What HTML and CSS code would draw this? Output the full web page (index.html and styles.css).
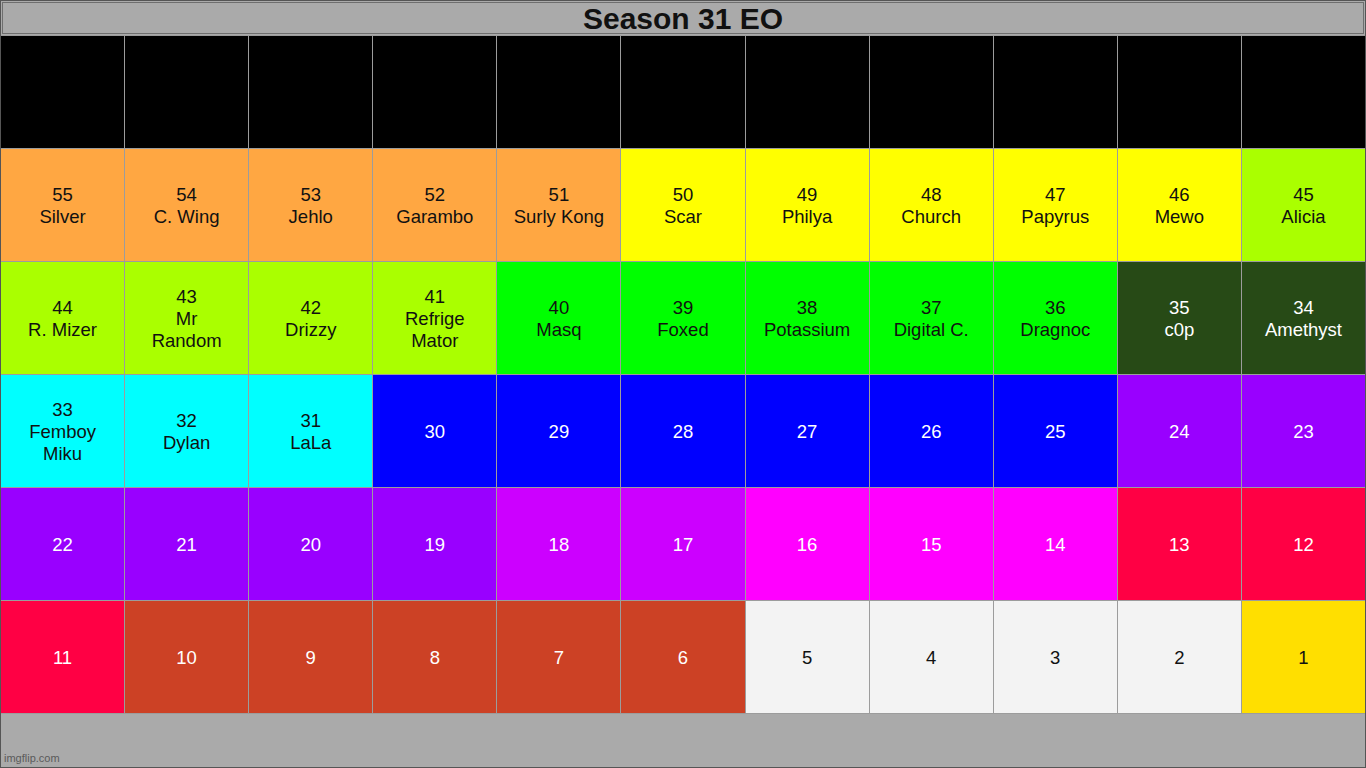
FILE: index.html
```html
<!DOCTYPE html>
<html>
<head>
<meta charset="utf-8">
<title>Season 31 EO</title>
<link rel="stylesheet" href="styles.css">
</head>
<body>
<div class="page">
  <div class="title">Season 31 EO</div>
  <div class="grid">
    <div class="c k"></div><div class="c k"></div><div class="c k"></div><div class="c k"></div><div class="c k"></div><div class="c k"></div><div class="c k"></div><div class="c k"></div><div class="c k"></div><div class="c k"></div><div class="c k"></div>

    <div class="c orange">55<br>Silver</div>
    <div class="c orange">54<br>C. Wing</div>
    <div class="c orange">53<br>Jehlo</div>
    <div class="c orange">52<br>Garambo</div>
    <div class="c orange">51<br>Surly Kong</div>
    <div class="c yellow">50<br>Scar</div>
    <div class="c yellow">49<br>Philya</div>
    <div class="c yellow">48<br>Church</div>
    <div class="c yellow">47<br>Papyrus</div>
    <div class="c yellow">46<br>Mewo</div>
    <div class="c lime">45<br>Alicia</div>

    <div class="c lime">44<br>R. Mizer</div>
    <div class="c lime">43<br>Mr<br>Random</div>
    <div class="c lime">42<br>Drizzy</div>
    <div class="c lime">41<br>Refrige<br>Mator</div>
    <div class="c green">40<br>Masq</div>
    <div class="c green">39<br>Foxed</div>
    <div class="c green">38<br>Potassium</div>
    <div class="c green">37<br>Digital C.</div>
    <div class="c green">36<br>Dragnoc</div>
    <div class="c dgreen">35<br>c0p</div>
    <div class="c dgreen">34<br>Amethyst</div>

    <div class="c cyan">33<br>Femboy<br>Miku</div>
    <div class="c cyan">32<br>Dylan</div>
    <div class="c cyan">31<br>LaLa</div>
    <div class="c blue">30</div>
    <div class="c blue">29</div>
    <div class="c blue">28</div>
    <div class="c blue">27</div>
    <div class="c blue">26</div>
    <div class="c blue">25</div>
    <div class="c purple">24</div>
    <div class="c purple">23</div>

    <div class="c purple">22</div>
    <div class="c purple">21</div>
    <div class="c purple">20</div>
    <div class="c purple">19</div>
    <div class="c violet">18</div>
    <div class="c violet">17</div>
    <div class="c magenta">16</div>
    <div class="c magenta">15</div>
    <div class="c magenta">14</div>
    <div class="c red">13</div>
    <div class="c red">12</div>

    <div class="c red">11</div>
    <div class="c brown">10</div>
    <div class="c brown">9</div>
    <div class="c brown">8</div>
    <div class="c brown">7</div>
    <div class="c brown">6</div>
    <div class="c light">5</div>
    <div class="c light">4</div>
    <div class="c light">3</div>
    <div class="c light">2</div>
    <div class="c gold">1</div>
  </div>
  <div class="footer"><span class="mark">imgflip.com</span></div>
</div>
</body>
</html>
```

FILE: styles.css
```css
html, body {
  margin: 0;
  padding: 0;
  background: #aaaaaa;
}
.page {
  width: 1366px;
  height: 768px;
  box-sizing: border-box;
  border: 1px solid #555555;
  background: #aaaaaa;
  display: flex;
  flex-direction: column;
  font-family: "Liberation Sans", Arial, sans-serif;
}
.title {
  margin: 1px 1px 0 1px;
  height: 32px;
  box-sizing: border-box;
  border: 1px solid #6e6e6e;
  background: #aaaaaa;
  color: #111111;
  font-weight: bold;
  font-size: 30px;
  line-height: 31px;
  text-align: center;
}
.grid {
  margin-top: 1px;
  display: grid;
  grid-template-columns: repeat(11, 1fr);
  grid-auto-rows: 112px;
  gap: 1px;
  background: #9c9c9c;
  border-top: 1px solid #9c9c9c;
  border-bottom: 1px solid #9c9c9c;
}
.c {
  display: flex;
  align-items: center;
  justify-content: center;
  text-align: center;
  box-sizing: border-box;
  padding-top: 2px;
  font-size: 18.5px;
  line-height: 22px;
  color: #111111;
}
.k { background: #000000; }
.orange { background: #ffa742; }
.yellow { background: #ffff00; }
.lime { background: #aaff00; }
.green { background: #00ff00; }
.dgreen { background: #274a16; color: #ffffff; }
.cyan { background: #00ffff; }
.blue { background: #0000ff; color: #ffffff; }
.purple { background: #9900ff; color: #ffffff; }
.violet { background: #cc00ff; color: #ffffff; }
.magenta { background: #ff00ff; color: #ffffff; }
.red { background: #ff0044; color: #ffffff; }
.brown { background: #cc4125; color: #ffffff; }
.light { background: #f3f3f3; }
.gold { background: #ffdf00; }
.footer {
  flex: 1;
  display: flex;
  align-items: flex-end;
  padding: 0 0 2px 3px;
}
.mark {
  font-size: 11px;
  color: #5a5a5a;
  line-height: 13px;
}
```
